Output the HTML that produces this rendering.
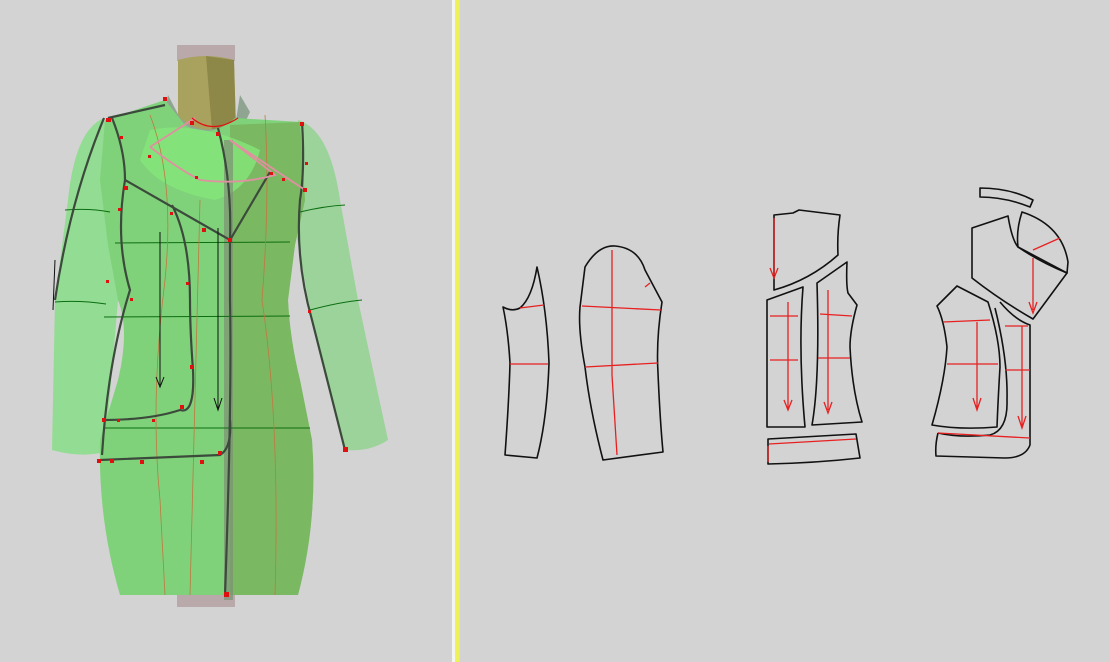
<!DOCTYPE html>
<html><head><style>
html,body{margin:0;padding:0;background:#d3d3d3;width:1109px;height:662px;overflow:hidden}
</style></head><body>
<svg width="1109" height="662" viewBox="0 0 1109 662" xmlns="http://www.w3.org/2000/svg">
<rect width="1109" height="662" fill="#d3d3d3"/>
<rect x="452" y="0" width="3" height="662" fill="#f4f4f0"/>
<rect x="455" y="0" width="4" height="662" fill="#eef25a"/>
<rect x="459" y="0" width="1" height="662" fill="#dfe3a0"/>

<!-- mannequin -->
<rect x="177" y="45" width="58" height="16" fill="#b9a9aa"/>
<rect x="177" y="595" width="58" height="12" fill="#b9a9aa"/>
<path d="M178 60 Q206 52 234 60 L236 130 L178 130 Z" fill="#a9a25f"/>
<path d="M206 56 L234 60 L236 130 L212 130 Z" fill="#8e8848"/>
<path d="M168 95 L180 118 Q205 140 236 120 L240 95 L250 112 L232 150 L200 150 L165 110 Z" fill="#8fa592"/>
<!-- left sleeve -->
<path d="M104 118 Q75 130 68 200 L55 300 L52 450 Q80 458 105 452 L118 300 L122 200 Z" fill="#8fdc8f" opacity="0.95"/>
<!-- right sleeve -->
<path d="M298 120 Q330 130 340 200 L358 300 L388 440 Q370 452 346 450 L312 320 L290 200 Z" fill="#9bd39b"/>
<!-- torso -->
<path d="M105 120 L165 100 L185 125 Q210 140 235 118 L300 122 L305 200 L295 245 L288 300 Q290 340 300 380 L312 440 Q318 520 298 595 L120 595 Q98 520 100 440 L118 380 Q130 330 118 300 L108 245 L100 180 Z" fill="#7fd27a"/>
<path d="M230 125 L300 122 L305 200 L295 245 L288 300 Q290 340 300 380 L312 440 Q318 520 298 595 L230 595 Z" fill="#7bb862"/>
<path d="M150 130 Q200 120 260 150 Q250 190 215 200 Q160 190 140 160 Z" fill="#86e67a" opacity="0.8"/>
<rect x="224" y="140" width="9" height="460" fill="#7d9075" opacity="0.7"/>
<!-- thin guide lines -->
<g fill="none" stroke="#0c6e10" stroke-width="1">
<path d="M65 210 Q90 208 110 212"/><path d="M300 212 Q325 206 345 205"/>
<path d="M55 302 Q80 300 106 304"/><path d="M310 310 Q340 302 362 300"/>
<path d="M115 243 L290 242"/><path d="M104 317 L290 316"/><path d="M105 428 L310 428"/>
</g>
<g fill="none" stroke="#c07840" stroke-width="0.8">
<path d="M150 115 Q175 180 165 280 Q150 400 160 500 L165 595"/>
<path d="M265 115 Q270 200 262 300 Q280 420 275 595"/>
<path d="M200 200 Q195 400 190 595"/>
</g>
<!-- dark seams -->
<g fill="none" stroke="#3c4a3c" stroke-width="2.2">
<path d="M108 118 L165 105"/>
<path d="M112 118 Q125 150 125 180 Q115 240 130 290 Q108 360 102 455"/>
<path d="M104 118 Q70 200 55 300"/>
<path d="M302 122 Q305 170 300 200 Q295 260 312 320 L345 450"/>
<path d="M125 180 L230 240 L270 172"/>
<path d="M172 205 Q190 240 190 300 Q190 330 193 370 Q195 415 180 410 Q150 420 102 420"/>
<path d="M218 128 Q232 180 230 240 L230 300 Q232 400 225 595"/>
<path d="M100 460 L220 455 Q232 448 230 420"/>
</g>
<g fill="none" stroke="#101010" stroke-width="1">
<path d="M160 232 L160 385 M156 377 L160 387 L164 377"/>
<path d="M218 228 L218 408 M214 398 L218 410 L222 398"/>
<path d="M55 260 L53 310"/>
</g>
<path d="M150 147 L195 118 M150 147 Q180 170 200 180 Q240 185 275 175 L230 140 L305 190" fill="none" stroke="#e090a0" stroke-width="1.8"/>
<path d="M192 118 Q212 135 238 118" fill="none" stroke="#e01010" stroke-width="1.2"/>
<g fill="#e01010">
<rect x="163" y="97" width="4" height="4"/><rect x="106" y="118" width="5" height="4"/><rect x="120" y="136" width="3" height="3"/>
<rect x="124" y="186" width="4" height="4"/><rect x="118" y="208" width="3" height="3"/><rect x="130" y="298" width="3" height="3"/>
<rect x="106" y="280" width="3" height="3"/><rect x="300" y="122" width="4" height="4"/><rect x="305" y="162" width="3" height="3"/>
<rect x="303" y="188" width="4" height="4"/><rect x="282" y="178" width="3" height="3"/><rect x="270" y="172" width="3" height="3"/>
<rect x="190" y="121" width="4" height="4"/><rect x="216" y="132" width="4" height="4"/><rect x="170" y="212" width="3" height="3"/>
<rect x="202" y="228" width="4" height="4"/><rect x="228" y="238" width="4" height="4"/><rect x="186" y="282" width="3" height="3"/>
<rect x="190" y="365" width="4" height="4"/><rect x="180" y="405" width="4" height="4"/><rect x="102" y="418" width="4" height="4"/>
<rect x="117" y="419" width="3" height="3"/><rect x="152" y="419" width="3" height="3"/><rect x="97" y="459" width="4" height="4"/>
<rect x="110" y="459" width="4" height="4"/><rect x="140" y="460" width="4" height="4"/><rect x="200" y="460" width="4" height="4"/>
<rect x="218" y="451" width="4" height="4"/><rect x="343" y="447" width="5" height="5"/><rect x="308" y="310" width="3" height="3"/>
<rect x="224" y="592" width="5" height="5"/><rect x="148" y="155" width="3" height="3"/><rect x="195" y="176" width="3" height="3"/>
</g>

<!-- pattern pieces -->
<g fill="none" stroke="#111" stroke-width="1.6" stroke-linejoin="round">
<path d="M503 307 Q512 312 520 308 Q532 298 537 267 Q547 310 549 363 Q547 420 537 458 L505 455 Q509 400 510 363 Q508 330 503 307 Z"/>
<path d="M585 267 Q598 245 615 246 Q638 248 645 270 L662 302 Q656 340 658 373 Q660 420 663 452 L603 460 Q590 410 585 367 Q578 330 580 307 Z"/>
<path d="M774 215 L793 213 L799 210 L840 215 Q837 235 838 255 Q810 280 774 290 Z"/>
<path d="M767 300 L803 287 Q798 350 805 427 L767 427 Z"/>
<path d="M817 283 L847 262 Q846 285 848 293 L857 305 Q850 330 850 347 Q852 390 862 422 L812 425 Q820 380 817 283 Z"/>
<path d="M768 439 L856 434 L860 458 Q815 463 768 464 Z"/>
<path d="M980 188 Q1010 188 1033 200 L1030 207 Q1005 197 980 197 Z"/>
<path d="M972 228 L1008 216 Q1012 240 1018 247 Q1040 262 1067 273 L1033 319 Q1000 300 972 278 Z"/>
<path d="M1022 212 Q1062 225 1068 262 L1067 273 L1018 247 Q1016 230 1022 212 Z"/>
<path d="M957 286 L988 302 Q1000 340 1000 367 Q998 400 997 427 Q960 430 932 425 Q945 380 947 347 Q944 320 937 306 Z"/>
<path d="M995 308 Q1008 360 1007 400 Q1008 430 990 435 Q960 438 938 433"/>
<path d="M1000 302 Q1015 320 1030 325 L1030 445 Q1025 458 1005 458 L936 456 Q935 445 938 433"/>
</g>
<g fill="none" stroke="#e82020" stroke-width="1.3">
<path d="M520 308 L544 305 M510 364 L548 364"/>
<path d="M612 250 L612 375 L617 455 M582 306 L661 310 M585 367 L658 363 M645 287 L650 283"/>
<path d="M774 218 L774 275 M770 268 L774 278 L778 268"/>
<path d="M770 316 L798 316 M770 360 L798 360 M788 302 L788 408 M784 400 L788 410 L792 400"/>
<path d="M820 314 L852 316 M818 358 L850 358 M828 290 L828 410 M824 402 L828 413 L832 402"/>
<path d="M769 444 L856 439 M768 446 L768 462"/>
<path d="M1033 250 L1060 238 M1033 258 L1033 310 M1029 302 L1033 313 L1037 302"/>
<path d="M943 322 L990 320 M947 364 L998 364 M977 322 L977 408 M973 398 L977 410 L981 398"/>
<path d="M1005 326 L1028 326 M1005 370 L1030 370 M1022 326 L1022 426 M1018 416 L1022 428 L1026 416"/>
<path d="M938 433 L1030 438"/>
</g>
</svg>
</body></html>
